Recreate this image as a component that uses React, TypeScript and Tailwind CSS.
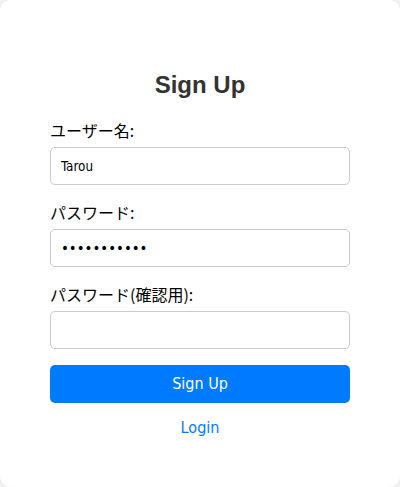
import { useState } from 'react';

const App = () => {
  const [username, setUsername] = useState('Tarou');
  const [password, setPassword] = useState('aaaaaaaaaaa');
  const [confirm, setConfirm] = useState('');

  return (
    <div className="min-h-[487px] w-[400px] bg-[#f4f4f4]">
      <div className="flex h-[487px] w-[400px] flex-col rounded-[10px] bg-white px-[50px] pt-[71px] shadow-[0_0_4px_rgba(0,0,0,0.08)]">
        <h2 className="mb-[19px] text-center font-['Liberation_Sans',Arial,sans-serif] text-[24px] font-bold leading-[28px] text-[#333]">
          Sign Up
        </h2>

        <form className="flex flex-col" onSubmit={(e) => e.preventDefault()}>
          <label className="mb-[5px] block font-['Noto_Sans_CJK_JP',sans-serif] text-[16px] leading-[24px] text-black">
            ユーザー名:
          </label>
          <input
            type="text"
            value={username}
            onChange={(e) => setUsername(e.target.value)}
            className="mb-[15px] h-[38px] w-full rounded-[5px] border border-[#ccc] px-[10px] font-['DejaVu_Sans_Condensed','DejaVu_Sans',sans-serif] text-[13.33px] text-black outline-none"
          />

          <label className="mb-[5px] block font-['Noto_Sans_CJK_JP',sans-serif] text-[16px] leading-[24px] text-black">
            パスワード:
          </label>
          <input
            type="password"
            value={password}
            onChange={(e) => setPassword(e.target.value)}
            className="mb-[15px] h-[38px] w-full rounded-[5px] border border-[#ccc] px-[10px] font-['DejaVu_Sans',sans-serif] text-[13.33px] text-black outline-none"
          />

          <label className="mb-[5px] block font-['Noto_Sans_CJK_JP',sans-serif] text-[16px] leading-[24px] text-black">
            パスワード(確認用):
          </label>
          <input
            type="password"
            value={confirm}
            onChange={(e) => setConfirm(e.target.value)}
            className="mb-[15px] h-[38px] w-full rounded-[5px] border border-[#ccc] px-[10px] font-['DejaVu_Sans',sans-serif] text-[13.33px] text-black outline-none"
          />

          <button
            type="submit"
            className="mt-px h-[38px] w-full rounded-[5px] bg-[#007bff] font-['DejaVu_Sans_Condensed','DejaVu_Sans',sans-serif] text-[16px] text-white"
          >
            Sign Up
          </button>
        </form>

        <p className="mt-[14px] text-center font-['DejaVu_Sans_Condensed','DejaVu_Sans',sans-serif] text-[16px] leading-[22px]">
          <a href="#" className="text-[#007bff]">
            Login
          </a>
        </p>
      </div>
    </div>
  );
};

export default App;
